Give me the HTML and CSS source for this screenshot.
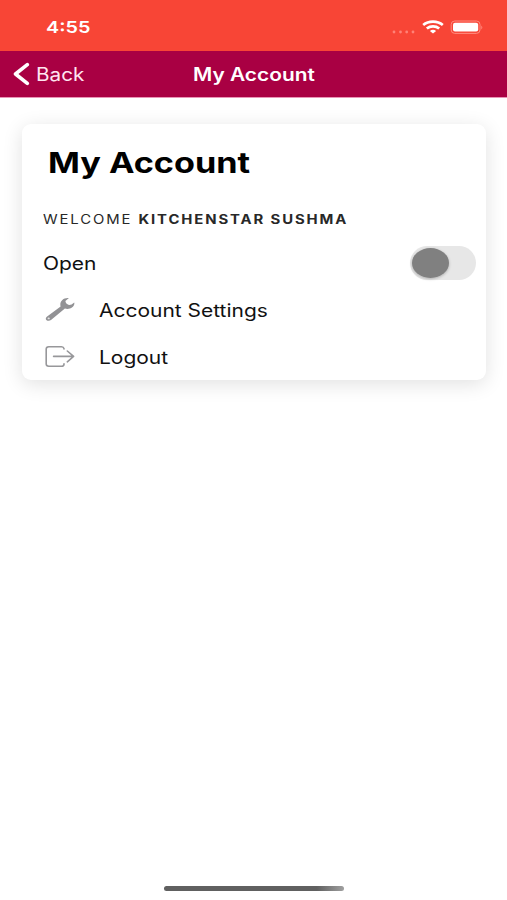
FILE: index.html
```html
<!DOCTYPE html>
<html lang="en">
<head>
<meta charset="utf-8">
<meta name="viewport" content="width=device-width">
<title>My Account</title>
<link rel="stylesheet" href="styles.css">
</head>
<body>
<div class="screen">
  <div class="status">
    <span class="wide time">4:55</span>
    <div class="indicators">
      <svg class="signal" width="24" height="4" viewBox="0 0 24 4"><g fill="#ff8277"><circle cx="2" cy="2" r="1.4"/><circle cx="8.5" cy="2" r="1.4"/><circle cx="14.7" cy="2" r="1.4"/><circle cx="21" cy="2" r="1.4"/></g></svg>
      <svg class="wifi" width="22" height="14" viewBox="0 0 22 14"><g fill="none" stroke="#fff" stroke-width="2.7"><path d="M1.2 5C6.5 .6 15.5 .6 20.8 5"/><path d="M4.8 8.5C8.3 5.6 13.7 5.6 17.2 8.5"/></g><path d="M7.9 10.9q3.1-2.3 6.2 0L11 13.5z" fill="#fff"/></svg>
      <svg class="battery" width="34" height="14" viewBox="0 0 34 14"><rect x="1.2" y="1" width="28.8" height="12.4" rx="3.5" fill="none" stroke="#ff8c80"/><rect x="3" y="2.8" width="25.2" height="8.8" rx="2" fill="#fff"/><path d="M31.3 5.4q2 1.8 0 4z" fill="#ff8c80"/></svg>
    </div>
  </div>
  <header class="nav">
    <a class="back"><svg width="17" height="24" viewBox="0 0 17 24"><path d="M14.3 2.7L2.5 12l11.8 9.3" fill="none" stroke="#fff" stroke-width="3.6" stroke-linecap="round" stroke-linejoin="round"/></svg><span class="wide back-label">Back</span></a>
    <span class="wide nav-title">My Account</span>
  </header>
  <main class="card">
    <h1 class="wide title">My Account</h1>
    <p class="wide welcome">WELCOME <b>KITCHENSTAR SUSHMA</b></p>
    <div class="row open"><span class="wide label open-label">Open</span><span class="switch"><i class="thumb"></i></span></div>
    <div class="row"><svg class="icon" width="32" height="26" viewBox="0 0 32 26"><path d="M2.8 19.8L16.6 9.6C15.2 4.6 19 .4 24.9 1L21.4 4Q21.6 7 25 7.9Q27.5 8 30.2 5.4C31.3 9.4 26.4 12.9 20.9 11.6L7 23C4 25.2-.2 22.4 2.8 19.8Z" fill="#929295"/><ellipse cx="4.7" cy="21.4" rx="1.1" ry=".9" fill="#e4e4e4"/></svg><span class="wide label settings-label">Account Settings</span></div>
    <div class="row"><svg class="icon" width="32" height="24" viewBox="0 0 32 24"><g fill="none" stroke="#97979a" stroke-width="1.6" stroke-linecap="round" stroke-linejoin="round"><path d="M20 4V3.6q-.4-1.9-2.5-1.9H4.8Q2.2 1.7 2.2 4v15q0 2.2 2.6 2.2h12.7q2.2 0 2.5-1.9v-.5M9.6 11.4h20M23.3 6l6.3 5.4-6.3 5.4"/></g></svg><span class="wide label logout-label">Logout</span></div>
  </main>
  <div class="home"></div>
</div>
</body>
</html>
```
FILE: styles.css
```css
* { box-sizing: border-box; }
body { margin: 0; background: #fff; font-family: Inter, "Liberation Sans", sans-serif; color: #111; }
.screen { height: 900px; display: flex; flex-direction: column; overflow: hidden; }
.wide { display: block; white-space: nowrap; transform-origin: 0 50%; }
.status { height: 51px; background: #f84536; display: flex; justify-content: space-between; padding: 0 23px 0 46px; color: #fff; }
.time { font-size: 16.5px; font-weight: 600; line-height: 20px; margin-top: 17px; transform: scaleX(1.2); }
.indicators { display: flex; margin-top: 20px; }
.signal { margin-top: 10px; }
.wifi { margin-left: 6px; }
.battery { margin-left: 6px; }
.nav { height: 47px; background: #a90043; border-bottom: 1px solid #e894b5; color: #fff; display: flex; align-items: center; padding-left: 13px; }
.back { display: flex; align-items: center; width: 180px; color: #ffe5f0; }
.back-label { margin: 2px 0 0 5.5px; font-size: 18px; line-height: 24px; transform: scaleX(1.15); }
.nav-title { margin-top: 2px; font-size: 18px; font-weight: 600; line-height: 24px; transform: scaleX(1.16); }
.card { margin: 26px 21px 0 22px; height: 256px; border-radius: 9px; background: #fff; box-shadow: 0 4px 20px rgba(0,0,0,.12); padding: 20px 10px 0 21px; }
.title { margin: 0 0 0 4.6px; font-size: 29px; line-height: 37px; font-weight: 700; color: #000; transform: scaleX(1.18); }
.welcome { margin: 29px 0 0; font-size: 12.6px; line-height: 20px; letter-spacing: 1.6px; color: #282828; transform: scaleX(1.18); }
.welcome b { font-weight: 650; }
.row { height: 47px; display: flex; align-items: center; }
.open { justify-content: space-between; margin-top: 9px; }
.label { margin-top: 2px; font-size: 18px; line-height: 24px; transform: scaleX(1.165); }
.settings-label, .logout-label { margin-left: -.5px; }
.icon { margin-left: 1px; margin-right: 23px; flex: none; }
.switch { width: 66px; height: 34px; border-radius: 17px; background: #e7e7e7; display: flex; align-items: center; padding-left: 2px; }
.thumb { width: 37px; height: 30px; border-radius: 50%; background: #808080; box-shadow: 0 1px 3px rgba(0,0,0,.25); }
.home { margin: auto auto 9px 164px; width: 180px; height: 5px; border-radius: 3px; background: linear-gradient(90deg, #606060 85%, #a0a0a0); }
```
